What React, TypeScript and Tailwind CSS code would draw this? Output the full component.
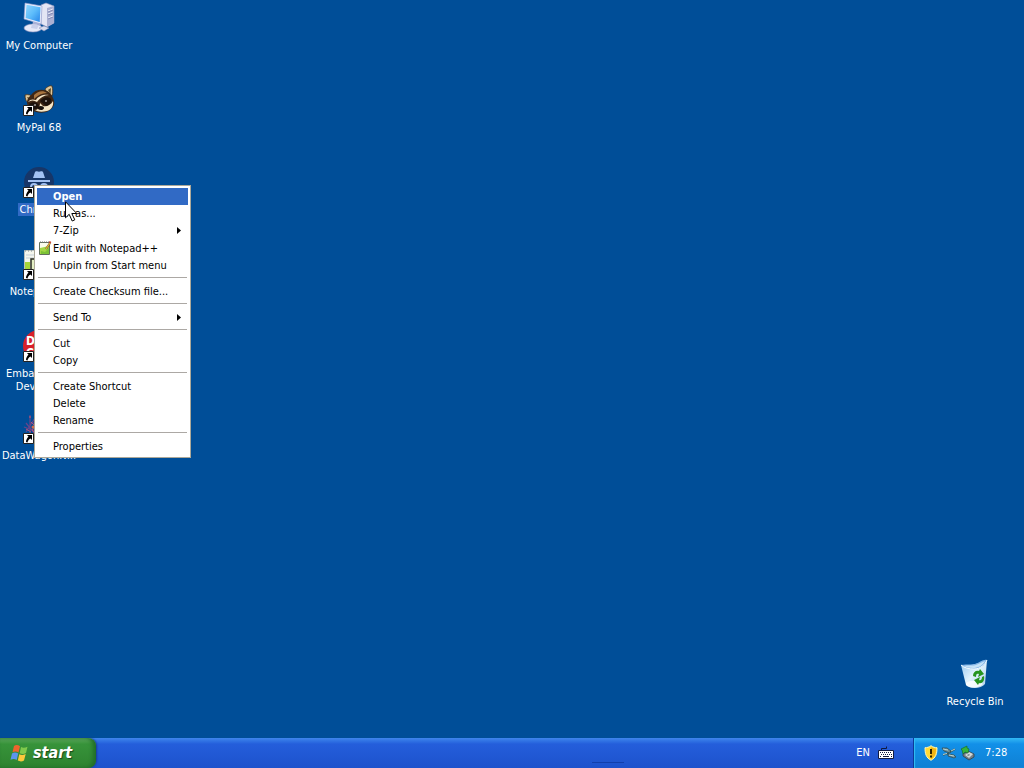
import type { ReactNode } from "react";

interface DesktopIconProps {
  label: string;
  selected?: boolean;
  shortcut?: boolean;
  children: ReactNode;
}

function ShortcutArrow() {
  return (
    <svg className="absolute bottom-0 left-0 h-[11px] w-[11px]" viewBox="0 0 11 11" aria-hidden="true">
      <path fill="#fff" stroke="#222" d="M.5.5h10v10H.5z" />
      <path d="M4 2h5v5L7.500 5.500C5.500 6.500 5 7.500 4.500 9.500L3 9C3 7 4 5 5.500 3.700z" />
    </svg>
  );
}

function DesktopIcon({ label, selected, shortcut, children }: DesktopIconProps) {
  return (
    <button className="flex h-[82px] w-[78px] flex-col items-center text-[11px] leading-[13px] text-white">
      <span className="relative mb-[5px] block h-8 w-8 shrink-0">
        {children}
        {shortcut && <ShortcutArrow />}
      </span>
      <span className={selected ? "bg-[#316ac5] px-0.5" : "px-0.5"}>{label}</span>
    </button>
  );
}

function ComputerIcon() {
  return (
    <svg className="h-8 w-8" viewBox="0 0 32 32" aria-hidden="true">
      <defs>
        <linearGradient id="screen" x1="0" y1="0" x2="1" y2="1">
          <stop offset="0" stopColor="#8fd6ff" />
          <stop offset="0.5" stopColor="#5cbcfb" />
          <stop offset="1" stopColor="#2684e8" />
        </linearGradient>
      </defs>
      <path fill="#e3e5f4" stroke="#8d93bd" strokeWidth=".6" d="M18 3l5-2 8 3v17l-7 4-6-3z" />
      <path fill="#a9afd2" d="M24 6l7-2v17l-7 4z" />
      <path stroke="#eceefa" d="M25 9l5-2M25 12l5-2M25 16l5-2" />
      <path stroke="#7078a8" strokeWidth=".7" d="M25 10l5-2M25 13l5-2M25 17l5-2" />
      <path fill="#b3b9dc" d="M10 19h7l1 7H9z" />
      <ellipse cx="10" cy="26" rx="9" ry="4" fill="#e6e9f8" stroke="#8990bd" strokeWidth=".6" />
      <path fill="#c9cfea" d="M9 22l7 1-2 4-6-1z" />
      <path fill="#e7ecfc" stroke="#8f9acb" strokeWidth=".6" d="M2 1l17 3-1 18-17-5z" />
      <path fill="url(#screen)" d="M3.500 2.800L17.500 5.300l-.8 14.700L2.600 16z" />
      <path fill="#d9dcec" stroke="#8990bd" strokeWidth=".5" d="M16 26l5-2 5 2-5 3z" />
    </svg>
  );
}

function RaccoonIcon() {
  return (
    <svg className="h-8 w-8" viewBox="0 0 32 32" aria-hidden="true">
      <path fill="#dfc698" stroke="#3b2a18" strokeWidth=".8" d="M2 11c3-1 6 0 8 2l-4 6c-3-1-4-4-4-8zM22 5c2-2 5-4 7-3 1 3 1 7 0 10l-5-2z" />
      <path fill="#5d4a25" d="M4 13l4 1-2 3zM25 6l3-2-.5 6z" />
      <path fill="#3f2715" d="M8 11C12 5 22 4 27 9c3 4 5 8 4 12-3 7-11 9-18 7-6-2-9-6-9-10 0-3 2-5 4-7z" />
      <path fill="#a8743f" d="M11 11c4-4 9-5 13-2-5 0-9 2-13 6z" />
      <path fill="#f5e6c8" d="M5 18c3-2 6-2 9 0 3-4 7-7 12-7-5-1-11 1-13 5-3-1-6-1-8 2z" />
      <path fill="#1d120c" d="M6 20c4-3 8-2 10 1l-2 5c-4-1-7-3-8-6zM17 17c3-4 8-5 11-2 1 3-1 6-5 7z" />
      <path fill="#f5e6c8" d="M17 19l3 3c4 1 8-1 10-5 1 5-2 9-6 10-5 1-9 1-12-1 3 0 5-3 5-7z" />
      <path fill="#17100d" d="M15 23c2-2 6-1 6 1s-4 3-6 1z" />
      <circle cx="12" cy="21" r=".8" fill="#fff" />
      <circle cx="23" cy="17" r=".8" fill="#fff" />
    </svg>
  );
}

function IncognitoIcon() {
  return (
    <svg className="h-8 w-8" viewBox="0 0 32 32" aria-hidden="true">
      <circle cx="16" cy="16" r="15" fill="#173668" />
      <path fill="#a3c1f2" d="M10 12l2-6c.3-1 1.200-1 2-.7l2 .5 2-.5c.8-.3 1.700-.3 2 .7l2 6zM5 14h22v2H5z" />
      <g fill="none" stroke="#a3c1f2" strokeWidth="2">
        <circle cx="11" cy="21" r="3" />
        <circle cx="21" cy="21" r="3" />
        <path d="M14 21c1-1 3-1 4 0" />
      </g>
    </svg>
  );
}

function NotepadIcon() {
  return (
    <svg className="h-8 w-8" viewBox="0 0 32 32" aria-hidden="true">
      <path fill="#f4f6ee" stroke="#b8c0c0" d="M1.500 2.500h26v28h-26z" />
      <path stroke="#7b8790" strokeDasharray="1 2" d="M2 3h25" />
      <path stroke="#c3cdd6" d="M3 7h23M3 10h23" />
      <path fill="#a6d53a" d="M2 14h5v16H2z" />
      <path fill="#e4efc4" stroke="#272b22" strokeWidth="1.500" d="M8 11h7v16H8z" />
      <path fill="#76b82a" d="M17 16h9v13h-9z" />
    </svg>
  );
}

function DevIcon() {
  return (
    <svg className="h-8 w-8" viewBox="0 0 32 32" aria-hidden="true">
      <circle cx="16" cy="16" r="16" fill="#d9202b" />
      <text x="3" y="15" fill="#fff" fontSize="12" fontWeight="700">DEV</text>
      <text x="3" y="27" fill="#fff" fontSize="12" fontWeight="700">C++</text>
    </svg>
  );
}

function WagonIcon() {
  return (
    <svg className="h-8 w-8" viewBox="0 0 32 32" fill="none" aria-hidden="true">
      <path stroke="#66458c" strokeWidth="1.200" d="M7 3v20M3 11l9 11M12 6L3 20M11 10v12M1 15l11 4" />
      <path stroke="#b0567a" d="M8 10l4 4-3 4 3 3M3 17l5 3" />
      <circle cx="7" cy="5" r="1" fill="#9b5477" />
      <circle cx="10" cy="15" r="1.500" fill="#d56c4a" />
    </svg>
  );
}

function RecycleBinIcon() {
  return (
    <svg className="h-8 w-8" viewBox="0 0 32 32" aria-hidden="true">
      <defs>
        <linearGradient id="bin" x1="0" y1="0" x2="1" y2="1">
          <stop offset="0" stopColor="#91c4ee" />
          <stop offset="0.5" stopColor="#e1f2fc" />
          <stop offset="1" stopColor="#a9cbe8" />
        </linearGradient>
      </defs>
      <path fill="url(#bin)" d="M2 7c8 1 18-1 26-5l-2 24c-4 5-15 5-19 1z" />
      <path fill="#84b5e6" d="M2 7c7-1 11 0 14-1 4-1 8-5 12-4-2 6-7 9-13 9C9 11 5 9 2 7z" />
      <path fill="#c5e2f7" d="M5 8c5-1 9 0 12-1s6-3 9-4c-3 5-7 7-12 7-4 0-7-1-9-2z" />
      <path fill="none" stroke="#f3fbff" d="M2 7c3 3 8 4 13 4 6 0 11-4 13-9" />
      <path fill="#fff" opacity=".8" d="M7 25c4-3 12-3 17 1-3 4-13 5-17 1z" />
      <path fill="#26941e" d="M14 18c0-4 3-6 6-5l1-2 4 5-6 3 1-3c-2-1-3 0-3 3zM25 18c1 5-2 8-5 7l-1 2-4-5 6-3-1 3c2 1 3-1 3-3z" />
    </svg>
  );
}

function EditIcon() {
  return (
    <svg className="h-4 w-4" viewBox="0 0 16 16" aria-hidden="true">
      <path fill="#fbfcec" stroke="#62705d" d="M2.500 2.500h10v12h-10z" />
      <path stroke="#777" strokeDasharray="1 1" d="M3 2h9" />
      <path fill="#a4d747" d="M3 8l9-2v8H3z" />
      <path fill="#7cc236" d="M4 11l4 1 4-4v6H4z" />
      <path stroke="#6d5227" strokeWidth="2" d="M9 9l4-6" />
      <path stroke="#eab63b" strokeWidth="1.200" d="M9 9l4-6" />
      <path stroke="#c23a25" strokeWidth="2" d="M12.500 3l1-1.500" />
    </svg>
  );
}

interface MenuEntry {
  label: string;
  bold?: boolean;
  submenu?: boolean;
  icon?: ReactNode;
}

const menuGroups: MenuEntry[][] = [
  [
    { label: "Open", bold: true },
    { label: "Run as..." },
    { label: "7-Zip", submenu: true },
    { label: "Edit with Notepad++", icon: <EditIcon /> },
    { label: "Unpin from Start menu" },
  ],
  [{ label: "Create Checksum file..." }],
  [{ label: "Send To", submenu: true }],
  [{ label: "Cut" }, { label: "Copy" }],
  [{ label: "Create Shortcut" }, { label: "Delete" }, { label: "Rename" }],
  [{ label: "Properties" }],
];

function MenuItem({ label, bold, submenu, icon }: MenuEntry) {
  return (
    <button
      role="menuitem"
      className={`flex w-full items-center pr-1.5 text-left ${icon ? "h-[18px]" : "h-[17px]"} ${
        bold ? "bg-[#316ac5] font-bold text-white" : "text-black"
      }`}
    >
      <span className="w-4 shrink-0">{icon}</span>
      <span className="flex-1 whitespace-nowrap">{label}</span>
      {submenu && (
        <svg className="h-[7px] w-[5px]" viewBox="0 0 5 7" aria-hidden="true">
          <path d="M0 0v7l4-3.500z" />
        </svg>
      )}
    </button>
  );
}

function ContextMenu() {
  return (
    <div
      role="menu"
      className="absolute top-[185px] left-[34px] w-[157px] border border-[#aca899] bg-white p-0.5 text-[11px] leading-[13px]"
    >
      {menuGroups.map((group, i) => (
        <div key={group[0].label}>
          {i > 0 && <hr className="mx-px mt-[3px] mb-[5px] border-[#aca8a4]" />}
          {group.map((item) => (
            <MenuItem key={item.label} {...item} />
          ))}
        </div>
      ))}
    </div>
  );
}

function Cursor() {
  return (
    <svg className="pointer-events-none absolute top-[201px] left-[65px] h-[21px] w-[14px]" viewBox="0 0 14 21" aria-hidden="true">
      <path fill="#fff" stroke="#000" d="M.5.8v16l3.700-3.500 3 6.700 2.600-1.200-3-6.300h5z" />
    </svg>
  );
}

function WindowsFlag() {
  return (
    <svg className="h-[18px] w-[19px]" viewBox="0 0 19 18" aria-hidden="true">
      <path fill="#ef642d" d="M4 2c2-1.500 4-1 6 .2L8.500 8.500c-2-1.400-4-1.300-6-.2z" />
      <path fill="#7fc94c" d="M11 3c2 1.200 4 1 6.500-.3L16 9c-2 1.200-4 1.200-6.300.2z" />
      <path fill="#5b95ed" d="M2 9.500c2-1.200 4-1.200 6.200.1L6.700 16c-2-1.400-4-1.400-6.200-.2z" />
      <path fill="#fbc83c" d="M9.300 10.300c2 1.200 4 1 6.400-.2L14 16.500c-2 1.200-4 1.200-6.200.1z" />
    </svg>
  );
}

function KeyboardIcon() {
  return (
    <svg className="h-4 w-4" viewBox="0 0 16 16" aria-hidden="true">
      <path fill="none" stroke="#101a40" d="M3.500 5V3.500h5V1.500" />
      <path fill="#fff" stroke="#101a40" d="M.5 5.500h15v8H.5z" />
      <path stroke="#101a40" strokeDasharray="1 1" d="M2 7.500h12M3 9.500h11" />
      <path stroke="#101a40" d="M2 11.500h1M5 11.500h6M13 11.500h1" />
    </svg>
  );
}

function ShieldIcon() {
  return (
    <svg className="h-4 w-4" viewBox="0 0 16 16" aria-hidden="true">
      <path fill="#ffdb35" stroke="#fff4b5" d="M8 .7c2 1.500 4 2 6 2 0 6-1 10-6 12.600C3 12.700 2 8.700 2 2.700c2 0 4-.5 6-2z" />
      <path fill="#f0b416" d="M8 2c2 1.300 3 1.700 5 1.700 0 5-1 8-5 10.300z" />
      <path stroke="#302300" strokeWidth="2" d="M8 4v5M8 10.500v2" />
    </svg>
  );
}

function NetworkIcon() {
  return (
    <svg className="h-4 w-4" viewBox="0 0 16 16" aria-hidden="true">
      <path fill="#6d8f95" stroke="#31525b" strokeWidth=".8" d="M1 3l5 0 4 3-1 2-6-2zM7 9l6 1 2 2-2 1-6-2z" />
      <path fill="none" stroke="#35585c" strokeWidth="1.800" d="M9 7l5-3M2 10l6-2" />
      <path stroke="#b9d3d4" d="M2 4l5 1M8 10l5 1M2 9.500l4-1M10 6l4-2" />
    </svg>
  );
}

function SafelyRemoveIcon() {
  return (
    <svg className="h-4 w-4" viewBox="0 0 16 16" aria-hidden="true">
      <path fill="#748089" stroke="#303f49" strokeWidth=".8" d="M4 9l5-3 6 3v3l-5 3-6-4z" />
      <path fill="#d2d8d8" d="M6 10l4-3 4 2-4 4z" />
      <path fill="#6b8389" d="M8 10l2-1 1 1-2 1z" />
      <path fill="#35b43a" stroke="#176d2c" strokeWidth=".7" d="M2 4l6-3v2l2 1-1 4-3-1-2 2-1-4z" />
    </svg>
  );
}

function Taskbar() {
  return (
    <footer className="flex h-[30px] bg-linear-to-b from-[#3f86ec] from-0% via-[#245edb] via-20% to-[#1d52cc] text-[11px] text-white">
      <button className="flex w-24 items-center gap-1 rounded-r-lg bg-linear-to-b from-[#60ac60] via-[#37933a] via-20% to-[#2e832f] pl-2.5 shadow-[inset_-3px_0_4px_#206c28,1px_0_2px_#173c93]">
        <WindowsFlag />
        <span className="text-[16px] leading-5 font-bold italic [text-shadow:1px_1px_1px_#174a1a]">start</span>
      </button>
      <div className="flex flex-1 items-end justify-center">
        <div className="mb-[5px] ml-[264px] h-px w-8 bg-[#123fab]" />
      </div>
      <div className="flex items-center gap-2 pr-[19px]">
        <button>EN</button>
        <button aria-label="Keyboard"><KeyboardIcon /></button>
      </div>
      <div className="flex w-[111px] items-center gap-0.5 border-l border-[#0c3b98] bg-linear-to-b from-[#32b8f4] from-0% via-[#1290e8] via-20% to-[#0f80d4] pl-[9px] shadow-[inset_1px_0_1px_#32c0f4]">
        <ShieldIcon />
        <NetworkIcon />
        <SafelyRemoveIcon />
        <time className="ml-2">7:28</time>
      </div>
    </footer>
  );
}

export default function App() {
  return (
    <div className="relative flex min-h-screen flex-col bg-[#004e98] font-['DejaVu_Sans_Condensed','DejaVu_Sans',sans-serif]">
      <main className="relative flex-1 pt-0.5">
        <div className="flex flex-col">
          <DesktopIcon label="My Computer"><ComputerIcon /></DesktopIcon>
          <DesktopIcon label="MyPal 68" shortcut><RaccoonIcon /></DesktopIcon>
          <DesktopIcon label="Chrome" selected shortcut><IncognitoIcon /></DesktopIcon>
          <DesktopIcon label="Notepad++" shortcut><NotepadIcon /></DesktopIcon>
          <DesktopIcon label="Embarcadero Dev-C++" shortcut><DevIcon /></DesktopIcon>
          <DesktopIcon label="DataWagonN..." shortcut><WagonIcon /></DesktopIcon>
        </div>
        <div className="absolute right-2.5 -bottom-0.5">
          <DesktopIcon label="Recycle Bin"><RecycleBinIcon /></DesktopIcon>
        </div>
      </main>
      <ContextMenu />
      <Cursor />
      <Taskbar />
    </div>
  );
}
